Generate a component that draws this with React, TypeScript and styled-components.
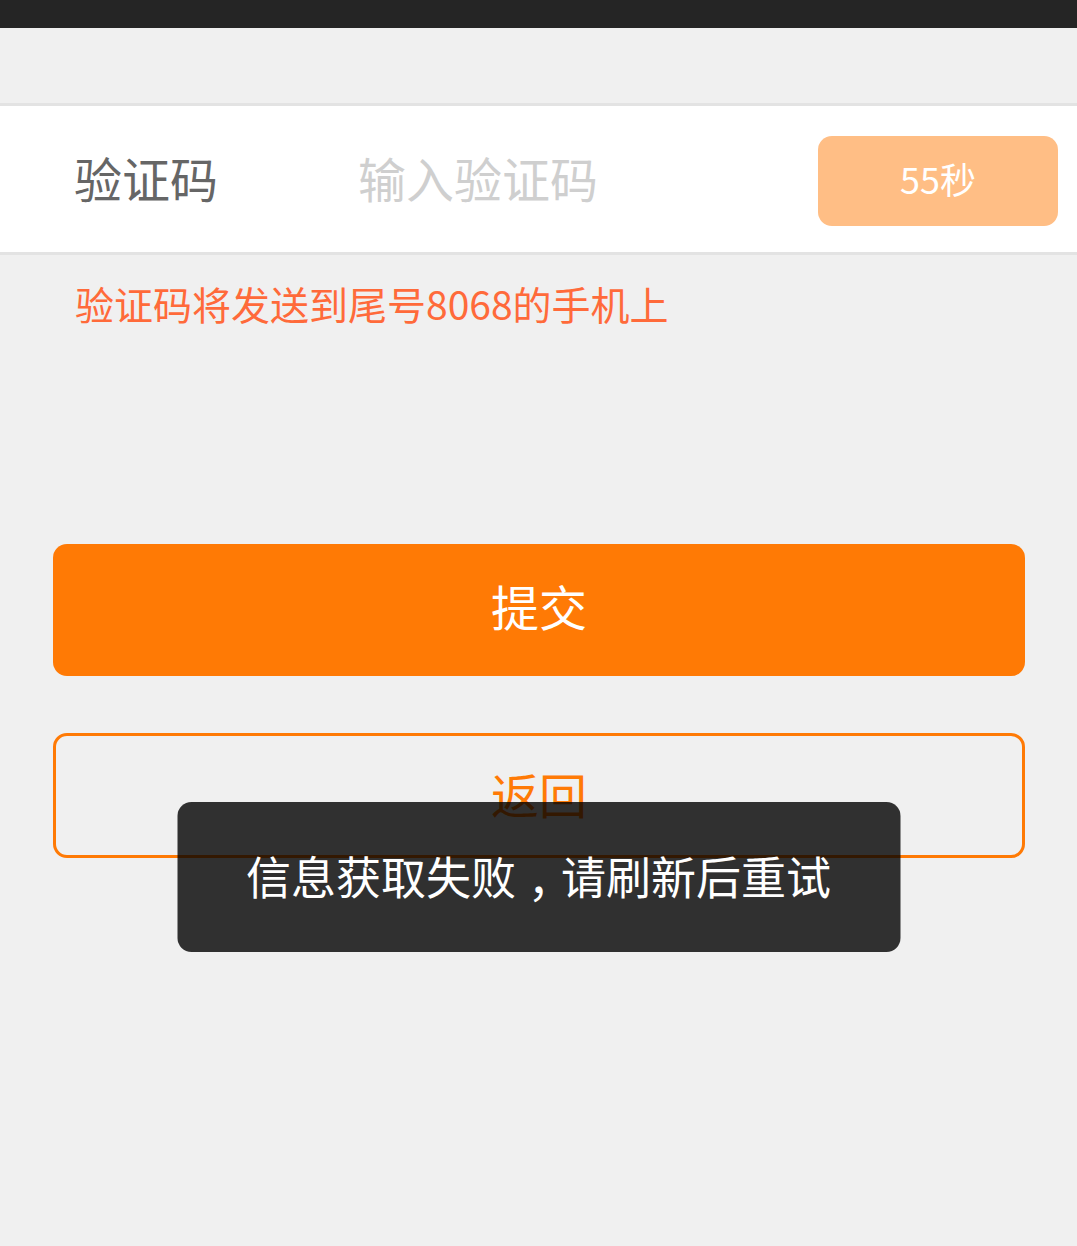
import styled, { createGlobalStyle } from "styled-components";

const GlobalStyle = createGlobalStyle`
  html, body {
    margin: 0;
    padding: 0;
    background-color: #f0f0f0;
    font-family: "Noto Sans CJK SC", "Noto Sans", sans-serif;
  }
`;

const Page = styled.div`
  width: 100%;
  min-height: 1246px;
  background-color: #f0f0f0;
  display: flex;
  flex-direction: column;
`;

const StatusBar = styled.div`
  width: 100%;
  height: 28px;
  background-color: #252525;
`;

const CodeRow = styled.div`
  margin-top: 75px;
  height: 146px;
  background-color: #ffffff;
  border-top: 3px solid #e3e3e3;
  border-bottom: 3px solid #e3e3e3;
  display: flex;
  align-items: center;
  padding: 0 19px 0 74px;
`;

const Label = styled.div`
  width: 284px;
  font-size: 48px;
  color: #666666;
  line-height: 1;
  margin-top: -4px;
`;

const CodeInput = styled.input`
  flex: 1;
  min-width: 0;
  border: none;
  outline: none;
  background: transparent;
  font-family: inherit;
  font-size: 48px;
  color: #333333;
  padding: 0;
  margin-top: -4px;

  &::placeholder {
    color: #cfcfcf;
  }
`;

const TimerButton = styled.button`
  width: 240px;
  height: 90px;
  margin-top: 4px;
  border: none;
  border-radius: 14px;
  background-color: #ffbe85;
  color: #ffffff;
  font-family: inherit;
  font-size: 36px;
  display: flex;
  align-items: center;
  justify-content: center;
  padding: 0 0 6px;
`;

const Hint = styled.div`
  padding-left: 75px;
  margin-top: 25px;
  font-size: 39px;
  line-height: 46px;
  color: #ff6a3a;
`;

const Actions = styled.div`
  margin-top: 218px;
  padding: 0 52px 0 53px;
  display: flex;
  flex-direction: column;
  gap: 57px;
`;

const ActionButton = styled.button<{ $outline?: boolean }>`
  width: 100%;
  height: ${(p) => (p.$outline ? "125px" : "132px")};
  border-radius: 14px;
  border: ${(p) => (p.$outline ? "3px solid #ff7a05" : "none")};
  background-color: ${(p) => (p.$outline ? "transparent" : "#ff7a05")};
  color: ${(p) => (p.$outline ? "#ff7a05" : "#ffffff")};
  font-family: inherit;
  font-size: 48px;
  display: flex;
  align-items: center;
  justify-content: center;
  padding: ${(p) => (p.$outline ? "0 0 6px" : "0 0 10px")};
`;

const Toast = styled.div`
  position: absolute;
  top: 802px;
  left: 50%;
  transform: translateX(-50%);
  width: 723px;
  height: 150px;
  border-radius: 14px;
  background-color: rgba(0, 0, 0, 0.8);
  color: #ffffff;
  font-size: 45px;
  display: flex;
  align-items: center;
  justify-content: center;
  padding-bottom: 4px;
  box-sizing: border-box;
  white-space: nowrap;
`;

/* full-width comma drawn centred in its cell, as the device font does */
const Comma = styled.span`
  display: inline-block;
  font-family: "Noto Sans CJK TC", sans-serif;
  transform: translateY(0.36em);
`;

export default function App() {
  return (
    <Page>
      <GlobalStyle />
      <StatusBar />
      <CodeRow>
        <Label>验证码</Label>
        <CodeInput placeholder="输入验证码" />
        <TimerButton>55秒</TimerButton>
      </CodeRow>
      <Hint>验证码将发送到尾号8068的手机上</Hint>
      <Actions>
        <ActionButton>提交</ActionButton>
        <ActionButton $outline>返回</ActionButton>
      </Actions>
      <Toast>
        信息获取失败<Comma>，</Comma>请刷新后重试
      </Toast>
    </Page>
  );
}
